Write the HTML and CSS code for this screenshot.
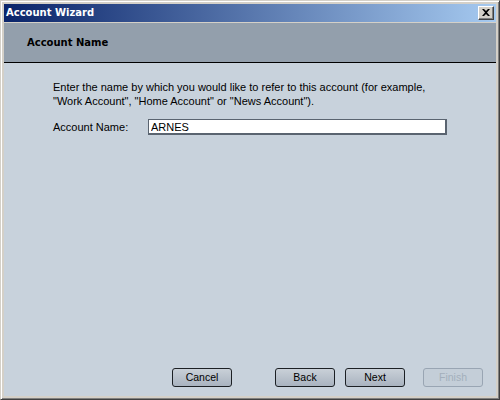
FILE: index.html
```html
<!DOCTYPE html>
<html>
<head>
<meta charset="utf-8">
<link rel="stylesheet" href="styles.css">
</head>
<body>
<div class="window">
  <div class="titlebar">
    <span class="title">Account Wizard</span>
    <span class="close"><svg width="8" height="7" viewBox="0 0 8 7"><path d="M0 0h2l2 2 2-2h2L5 3.5 8 7H6L4 5 2 7H0l3-3.5z" fill="#000"/></svg></span>
  </div>
  <div class="client">
    <div class="header"><h1 class="heading">Account Name</h1></div>
    <div class="content">
      <p class="intro">Enter the name by which you would like to refer to this account (for example,<br>"Work Account", "Home Account" or "News Account").</p>
      <div class="field">
        <label class="label" for="acct">Account Name:</label>
        <input class="input" id="acct" type="text" value="ARNES">
      </div>
    </div>
    <div class="buttons">
      <button class="btn btn-cancel">Cancel</button>
      <button class="btn btn-back">Back</button>
      <button class="btn btn-next">Next</button>
      <button class="btn btn-finish" disabled>Finish</button>
    </div>
  </div>
</div>
</body>
</html>
```
FILE: styles.css
```css
* { box-sizing: border-box; }
html, body { margin: 0; padding: 0; }
body { width: 500px; height: 400px; overflow: hidden; font-family: "Liberation Sans", Arial, sans-serif; }

.window {
  width: 500px;
  height: 400px;
  background: #d4d0c8;
  border-top: 1px solid #d4d0c8;
  border-left: 1px solid #d4d0c8;
  border-right: 1px solid #404040;
  border-bottom: 1px solid #404040;
  box-shadow: inset 1px 1px 0 #ffffff, inset -1px -1px 0 #808080;
  padding: 3px 3px 3px 3px;
  display: flex;
  flex-direction: column;
}

.titlebar {
  height: 18px;
  flex: none;
  background: linear-gradient(to right, #0a246a, #a6caf0);
  display: flex;
  align-items: center;
  justify-content: space-between;
  padding-left: 2px;
  padding-right: 2px;
}
.title {
  font-family: "DejaVu Sans", Verdana, sans-serif;
  font-weight: bold;
  font-size: 10px;
  color: #ffffff;
  line-height: 18px;
}
.close {
  width: 16px;
  height: 14px;
  background: #d4d0c8;
  border-top: 1px solid #ffffff;
  border-left: 1px solid #ffffff;
  border-right: 1px solid #404040;
  border-bottom: 1px solid #404040;
  box-shadow: inset -1px -1px 0 #808080;
  display: flex;
  align-items: center;
  justify-content: center;
  padding-right: 1px;
  padding-bottom: 1px;
}
.close svg { display: block; }

.client {
  margin-top: 1px;
  flex: 1;
  display: flex;
  flex-direction: column;
  background: #c8d2dc;
}

.header {
  height: 40px;
  flex: none;
  background: #939fac;
  border-bottom: 1px solid #000000;
  display: flex;
  align-items: center;
  padding-left: 23px;
}
.heading {
  margin: 0;
  font-family: "DejaVu Sans", Verdana, sans-serif;
  font-weight: bold;
  font-size: 10px;
  color: #000000;
  line-height: 14px;
}

.content {
  flex: 1;
  padding: 17px 0 0 49px;
}
.intro {
  margin: 0;
  font-size: 11px;
  line-height: 14px;
  color: #000000;
}
.field {
  display: flex;
  align-items: center;
  margin-top: 11px;
}
.label {
  width: 95px;
  font-size: 11px;
  line-height: 14px;
  color: #000000;
}
.input {
  width: 299px;
  height: 16px;
  margin: 0;
  padding: 0 0 0 2px;
  background: #ffffff;
  border-top: 1px solid #5a6470;
  border-left: 1px solid #5a6470;
  border-right: 2px solid #5a6470;
  border-bottom: 2px solid #5a6470;
  font-family: "Liberation Sans", Arial, sans-serif;
  font-size: 11px;
  color: #000000;
  outline: none;
}

.buttons {
  flex: none;
  display: flex;
  justify-content: flex-end;
  padding: 0 13px 9px 0;
}
.btn {
  width: 60px;
  height: 19px;
  margin: 0;
  padding: 0;
  border: 1px solid #1c2024;
  border-radius: 3px;
  background: linear-gradient(to bottom, #c9d0d8, #a9b3bf);
  font-family: "Liberation Sans", Arial, sans-serif;
  font-size: 10.5px;
  color: #000000;
  line-height: 17px;
}
.btn-back { margin-left: 43px; }
.btn-next { margin-left: 10px; }
.btn-finish {
  margin-left: 18px;
  border-color: #99a5b3;
  background: #c4ced8;
  color: #a3aebb;
}
```
